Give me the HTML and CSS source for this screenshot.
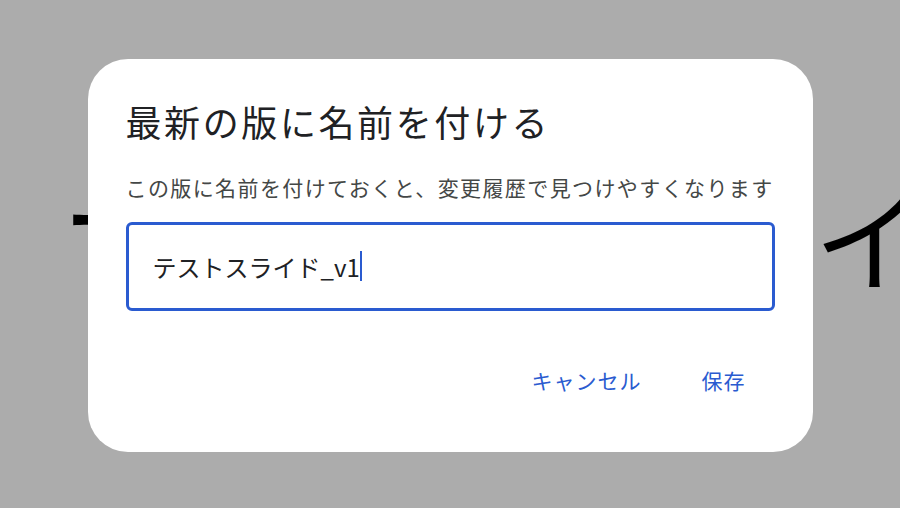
FILE: index.html
```html
<!DOCTYPE html>
<html lang="ja">
<head>
<meta charset="utf-8">
<title>最新の版に名前を付ける</title>
<link rel="stylesheet" href="styles.css">
</head>
<body>
<div class="backdrop">
  <span class="bg-glyph bg-left">ー</span>
  <span class="bg-glyph bg-right">イ</span>
  <div class="dialog" role="dialog">
    <h1 class="title">最新の版に名前を付ける</h1>
    <p class="desc">この版に名前を付けておくと、変更履歴で見つけやすくなります</p>
    <div class="field"><span class="value">テストスライド_v1</span><span class="caret"></span></div>
    <div class="actions">
      <button class="btn">キャンセル</button>
      <button class="btn">保存</button>
    </div>
  </div>
</div>
</body>
</html>
```
FILE: styles.css
```css
html, body {
  margin: 0;
  padding: 0;
  width: 900px;
  height: 508px;
  overflow: hidden;
}
body {
  font-family: "Noto Sans CJK JP", "Noto Sans", sans-serif;
  background: #acacac;
}
.backdrop {
  position: relative;
  width: 900px;
  height: 508px;
  display: flex;
  align-items: center;
  justify-content: center;
}
.bg-glyph {
  position: absolute;
  font-size: 110px;
  line-height: 1;
  color: #000;
}
.bg-left {
  left: 62px;
  top: 159px;
}
.bg-right {
  left: 814px;
  top: 181px;
}
.dialog {
  position: relative;
  width: 725px;
  height: 393px;
  box-sizing: border-box;
  background: #fff;
  border-radius: 40px;
  padding: 38px 36px 0 38px;
  display: flex;
  flex-direction: column;
  margin-top: 2px;
}
.title {
  margin: 0;
  font-size: 36px;
  font-weight: 400;
  letter-spacing: 2.6px;
  line-height: 48px;
  color: #202124;
}
.desc {
  margin: 27px 0 0 0;
  font-size: 21px;
  line-height: 30px;
  letter-spacing: 1.4px;
  white-space: nowrap;
  color: #444746;
}
.field {
  margin-top: 20px;
  margin-right: 2px;
  flex: 0 0 89px;
  height: 89px;
  box-sizing: border-box;
  border: 3px solid #2a5bd0;
  border-radius: 6px;
  display: flex;
  align-items: center;
  padding-left: 24px;
}
.value {
  font-size: 24px;
  color: #202124;
}
.caret {
  width: 2px;
  height: 30px;
  background: #2a5bd0;
  margin-left: 0;
}
.actions {
  display: flex;
  justify-content: flex-end;
  gap: 60px;
  margin-top: 54px;
  padding-right: 31px;
}
.btn {
  border: none;
  background: none;
  padding: 0;
  font-family: inherit;
  font-size: 21px;
  letter-spacing: 1px;
  color: #2a5bd0;
  line-height: 30px;
}
```
